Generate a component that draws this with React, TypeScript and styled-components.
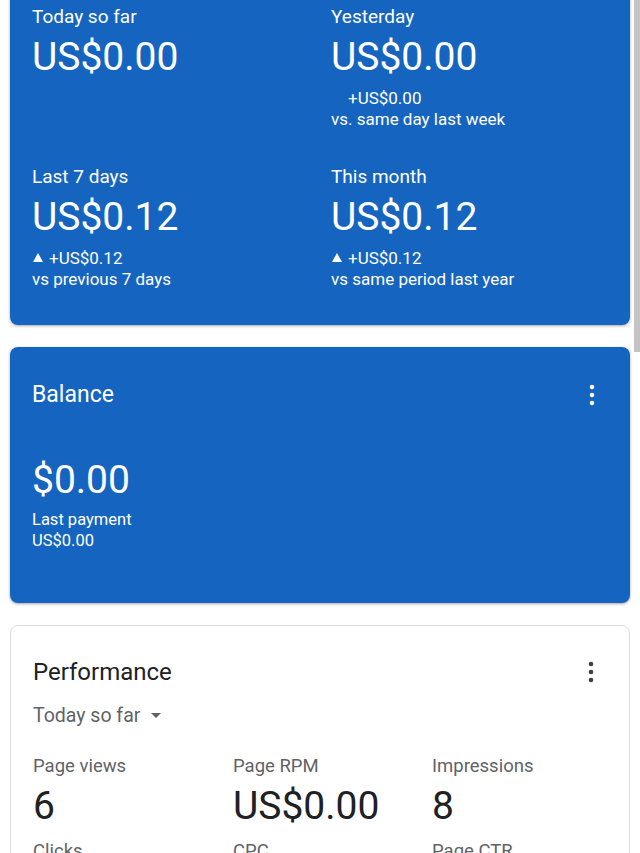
import React from "react";
import styled, { createGlobalStyle } from "styled-components";

const Global = createGlobalStyle`
  html, body { margin: 0; padding: 0; background: #ffffff; }
  body { font-family: Roboto, "Noto Sans", Arial, sans-serif; overflow: hidden; }
  * { box-sizing: border-box; }
`;

const Page = styled.div`
  display: flex;
  flex-direction: column;
  gap: 22px;
  padding: 0 10px 40px 10px;
`;

const BlueCard = styled.section<{ $top?: boolean }>`
  background: #1565c0;
  color: #ffffff;
  border-radius: 8px;
  box-shadow: 0 1px 3px rgba(0, 0, 0, 0.35);
  margin-top: ${(p) => (p.$top ? "-16px" : "0")};
  padding: ${(p) => (p.$top ? "22px 22px 35px" : "34px 22px 52px")};
`;

const WhiteCard = styled.section`
  background: #ffffff;
  border: 1px solid #dadce0;
  border-radius: 8px;
  padding: 32px 22px 32px;
`;

const StatGrid = styled.div`
  display: grid;
  grid-template-columns: 299px 1fr;
  row-gap: 36.5px;
`;

const Stat = styled.div`
  display: flex;
  flex-direction: column;
`;

const StatLabel = styled.div`
  font-size: 19px;
  line-height: 22px;
`;

const BigValue = styled.div<{ $dark?: boolean }>`
  font-size: 39px;
  line-height: 44px;
  margin-top: 7px;
  color: ${(p) => (p.$dark ? "#202124" : "#ffffff")};
`;

const SubLine = styled.div<{ $first?: boolean; $size?: number }>`
  display: flex;
  align-items: center;
  height: 21px;
  font-size: ${(p) => p.$size ?? 17}px;
  line-height: 21px;
  margin-top: ${(p) => (p.$first ? "8.5px" : "0")};
  white-space: nowrap;
`;

const Tri = styled.span<{ $hidden?: boolean }>`
  display: inline-block;
  width: 0;
  height: 0;
  margin: 0 6px 1px 1px;
  border-left: 5px solid transparent;
  border-right: 5px solid transparent;
  border-bottom: 9px solid #ffffff;
  visibility: ${(p) => (p.$hidden ? "hidden" : "visible")};
`;

const Header = styled.div`
  display: flex;
  justify-content: space-between;
  align-items: center;
  height: 28px;
`;

const Title = styled.h2<{ $dark?: boolean; $size?: number }>`
  margin: 0;
  font-weight: 400;
  font-size: ${(p) => p.$size ?? 23}px;
  line-height: 28px;
  color: ${(p) => (p.$dark ? "#202124" : "#ffffff")};
`;

const MenuButton = styled.div`
  width: 24px;
  height: 24px;
  display: flex;
  align-items: center;
  justify-content: center;
  margin-right: 4px;
`;

const BalanceValue = styled.div`
  font-size: 39px;
  line-height: 44px;
  margin-top: 49px;
  margin-bottom: 7.5px;
`;

const Dropdown = styled.div`
  display: flex;
  align-items: center;
  margin-top: 17px;
  height: 24px;
  font-size: 19.5px;
  color: #5f6368;
`;

const Caret = styled.span`
  width: 0;
  height: 0;
  margin-left: 11px;
  border-left: 5px solid transparent;
  border-right: 5px solid transparent;
  border-top: 5px solid #5f6368;
`;

const MetricGrid = styled.div`
  display: grid;
  grid-template-columns: 200px 199px 1fr;
  row-gap: 12px;
  margin-top: 28px;
`;

const MetricLabel = styled.div`
  font-size: 18.5px;
  line-height: 22px;
  color: #5f6368;
`;

function Dots({ color }: { color: string }) {
  return (
    <svg width="6" height="22" viewBox="0 0 6 22">
      <circle cx="3" cy="3" r="2.3" fill={color} />
      <circle cx="3" cy="11" r="2.3" fill={color} />
      <circle cx="3" cy="19" r="2.3" fill={color} />
    </svg>
  );
}

const ScrollThumb = styled.div`
  position: fixed;
  top: 0;
  right: 0;
  width: 6px;
  height: 352px;
  background: #c4c4c4;
`;

type Earning = { label: string; value: string; delta?: string; vs?: string; hidden?: boolean };

const earnings: Earning[] = [
  { label: "Today so far", value: "US$0.00" },
  { label: "Yesterday", value: "US$0.00", delta: "+US$0.00", vs: "vs. same day last week", hidden: true },
  { label: "Last 7 days", value: "US$0.12", delta: "+US$0.12", vs: "vs previous 7 days" },
  { label: "This month", value: "US$0.12", delta: "+US$0.12", vs: "vs same period last year" },
];

const metrics = [
  { label: "Page views", value: "6" },
  { label: "Page RPM", value: "US$0.00" },
  { label: "Impressions", value: "8" },
  { label: "Clicks", value: "0" },
  { label: "CPC", value: "US$0.00" },
  { label: "Page CTR", value: "0.00%" },
];

export default function App() {
  return (
    <>
      <Global />
      <Page>
        <BlueCard $top>
          <StatGrid>
            {earnings.map((e) => (
              <Stat key={e.label}>
                <StatLabel>{e.label}</StatLabel>
                <BigValue>{e.value}</BigValue>
                {e.delta && (
                  <>
                    <SubLine $first>
                      <Tri $hidden={e.hidden} />
                      {e.delta}
                    </SubLine>
                    <SubLine>{e.vs}</SubLine>
                  </>
                )}
              </Stat>
            ))}
          </StatGrid>
        </BlueCard>

        <BlueCard>
          <Header>
            <Title>Balance</Title>
            <MenuButton>
              <Dots color="#ffffff" />
            </MenuButton>
          </Header>
          <BalanceValue>$0.00</BalanceValue>
          <SubLine $size={16.5}>Last payment</SubLine>
          <SubLine $size={16.5}>US$0.00</SubLine>
        </BlueCard>

        <WhiteCard>
          <Header>
            <Title $dark $size={24}>Performance</Title>
            <MenuButton>
              <Dots color="#3c4043" />
            </MenuButton>
          </Header>
          <Dropdown>
            Today so far
            <Caret />
          </Dropdown>
          <MetricGrid>
            {metrics.map((m) => (
              <Stat key={m.label}>
                <MetricLabel>{m.label}</MetricLabel>
                <BigValue $dark>{m.value}</BigValue>
              </Stat>
            ))}
          </MetricGrid>
        </WhiteCard>
      </Page>
      <ScrollThumb />
    </>
  );
}
